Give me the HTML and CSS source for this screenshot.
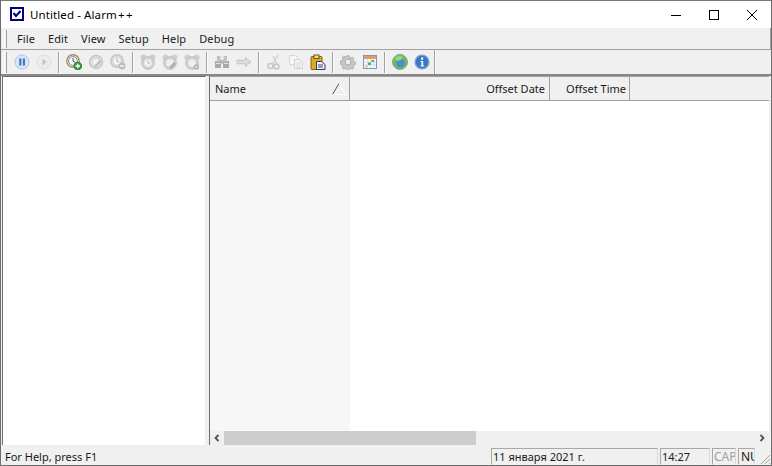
FILE: index.html
```html
<!DOCTYPE html>
<html lang="en">
<head>
<meta charset="utf-8">
<title>Untitled - Alarm++</title>
<link rel="stylesheet" href="styles.css">
</head>
<body>
<div class="window">
  <header class="titlebar">
    <svg class="appicon" width="14" height="14" viewBox="0 0 14 14"><rect x="1" y="1" width="12" height="12" fill="#fff" stroke="#000080" stroke-width="2"/><path d="M3.500 6l2.500 3 4.500-5" fill="none" stroke="#000080" stroke-width="2"/></svg>
    <span class="title">Untitled - Alarm<span class="plus">++</span></span>
    <div class="caption">
      <span class="capbtn"><svg width="12" height="12" viewBox="0 0 12 12"><path d="M1 6.500h10" stroke="#000"/></svg></span>
      <span class="capbtn"><svg width="12" height="12" viewBox="0 0 12 12"><rect x="1.500" y="1.500" width="9" height="9" fill="none" stroke="#000"/></svg></span>
      <span class="capbtn"><svg width="12" height="12" viewBox="0 0 12 12"><path d="M1 1l10 10M11 1L1 11" stroke="#000" fill="none"/></svg></span>
    </div>
  </header>
  <nav class="menubar">
    <span class="grip"></span>
    <span class="menu">File</span><span class="menu">Edit</span><span class="menu">View</span><span class="menu">Setup</span><span class="menu">Help</span><span class="menu">Debug</span>
  </nav>
  <div class="toolbar">
    <span class="grip tall"></span>
    <span class="tool"><svg viewBox="0 0 16 16"><circle cx="8" cy="8" r="7" fill="#dbe7f6" stroke="#a9c3e6"/><rect x="5.200" y="4.500" width="2.200" height="7" fill="#3f78c8"/><rect x="8.800" y="4.500" width="2.200" height="7" fill="#3f78c8"/></svg></span>
    <span class="tool"><svg viewBox="0 0 16 16"><circle cx="8" cy="8" r="7" fill="#ececec" stroke="#dedede"/><path d="M6.500 4.500l4 3.500-4 3.500z" fill="#c2c2c2"/></svg></span>
    <span class="sep"></span>
    <span class="tool"><svg viewBox="0 0 16 16"><circle cx="7" cy="7" r="6.200" fill="#e9eef5" stroke="#b08f52" stroke-width="1.400"/><circle cx="7" cy="7" r="4.400" fill="#f6f8fb" stroke="#6f8fb8"/><path d="M7 4v3.200l2.200 1" fill="none" stroke="#44608c"/><circle cx="11.800" cy="12" r="3.800" fill="#3f9e3f" stroke="#2c7a2c"/><path d="M11.800 9.800v4.400M9.600 12h4.400" stroke="#fff" stroke-width="1.300"/></svg></span>
    <span class="tool"><svg viewBox="0 0 16 16"><circle cx="8" cy="8" r="6.500" fill="#e2e2e2" stroke="#c4c4c4" stroke-width="1.400"/><circle cx="8" cy="8" r="4" fill="#f2f2f2" stroke="#cfcfcf"/><path d="M6 12l6-6 1.500 1.500-6 6z" fill="#bdbdbd"/></svg></span>
    <span class="tool"><svg viewBox="0 0 16 16"><circle cx="7" cy="7" r="6.200" fill="#e2e2e2" stroke="#c4c4c4" stroke-width="1.400"/><circle cx="7" cy="7" r="4.200" fill="#f4f4f4" stroke="#cfcfcf"/><path d="M7 4.200v3l2 1" fill="none" stroke="#b0b0b0"/><circle cx="12" cy="12" r="3.500" fill="#bcbcbc"/><path d="M10 12h4" stroke="#fff" stroke-width="1.300"/></svg></span>
    <span class="sep"></span>
    <span class="tool"><svg viewBox="0 0 16 16"><circle cx="3.500" cy="3.500" r="3" fill="#cfcfcf"/><circle cx="12.500" cy="3.500" r="3" fill="#cfcfcf"/><circle cx="8" cy="9" r="6.300" fill="#d2d2d2" stroke="#bebebe"/><circle cx="8" cy="9" r="3.800" fill="#f0f0f0"/><path d="M8 6.500V9l2 1" fill="none" stroke="#b5b5b5"/></svg></span>
    <span class="tool"><svg viewBox="0 0 16 16"><circle cx="3.500" cy="3.500" r="3" fill="#cfcfcf"/><circle cx="12.500" cy="3.500" r="3" fill="#cfcfcf"/><circle cx="8" cy="9" r="6.300" fill="#d2d2d2" stroke="#bebebe"/><circle cx="8" cy="9" r="3.800" fill="#f0f0f0"/><path d="M7 13l5-5 2 2-5 5z" fill="#aeaeae"/></svg></span>
    <span class="tool"><svg viewBox="0 0 16 16"><circle cx="3.500" cy="3.500" r="3" fill="#cfcfcf"/><circle cx="12.500" cy="3.500" r="3" fill="#cfcfcf"/><circle cx="8" cy="9" r="6.300" fill="#d2d2d2" stroke="#bebebe"/><circle cx="8" cy="9" r="3.800" fill="#f0f0f0"/><circle cx="12.500" cy="13" r="2.700" fill="#b0b0b0"/><path d="M11 13h3" stroke="#fff"/></svg></span>
    <span class="sep"></span>
    <span class="tool"><svg viewBox="0 0 16 16"><rect x="1" y="7" width="6" height="7" fill="#a8a8a8"/><rect x="9" y="7" width="6" height="7" fill="#a8a8a8"/><rect x="3" y="2" width="3.500" height="6" fill="#c2c2c2"/><rect x="9.500" y="2" width="3.500" height="6" fill="#c2c2c2"/><rect x="6" y="6" width="4" height="3.500" fill="#b4b4b4"/><path d="M2 9.500h4M10 9.500h4" stroke="#e6e6e6"/></svg></span>
    <span class="tool"><svg viewBox="0 0 16 16"><path d="M1 6.200h8.500V3.500L15 8l-5.500 4.500V9.800H1z" fill="#dcdcdc" stroke="#c4c4c4"/></svg></span>
    <span class="sep"></span>
    <span class="tool"><svg viewBox="0 0 16 16"><path d="M12 1L6.500 10M7 2l4 8" stroke="#d2d2d2" stroke-width="1.500" fill="none"/><circle cx="4.500" cy="12" r="2.500" fill="none" stroke="#c4c4c4" stroke-width="1.400"/><circle cx="10.500" cy="12.500" r="2.500" fill="none" stroke="#c4c4c4" stroke-width="1.400"/></svg></span>
    <span class="tool"><svg viewBox="0 0 16 16"><path d="M1.500 1.500h6l2 2v7h-8z" fill="#f7f7f7" stroke="#d6d6d6"/><path d="M6.500 5.500h5l3 3v6h-8z" fill="#f6f6f6" stroke="#d0d0d0"/><path d="M8 9h5M8 11h5M8 13h5" stroke="#d8d8d8"/></svg></span>
    <span class="tool"><svg viewBox="0 0 16 16"><rect x="1" y="2.500" width="11" height="13" rx="1" fill="#e0a928" stroke="#8a6410"/><rect x="4" y="1" width="5" height="3.500" fill="#f4dc8c" stroke="#6e5210"/><path d="M6.500 7.500h5l3.500 3v5h-8.500z" fill="#f4f6fa" stroke="#2f3c62"/><path d="M8 11h5M8 13h5" stroke="#37476e"/></svg></span>
    <span class="sep"></span>
    <span class="tool"><svg viewBox="0 0 16 16"><path d="M6.700.800h2.600l.4 2 1.600.7 1.700-1.100 1.900 1.900-1.100 1.700.7 1.600 2 .4v2.600l-2 .4-.7 1.600 1.100 1.700-1.900 1.900-1.700-1.100-1.600.7-.4 2H6.700l-.4-2-1.600-.7-1.700 1.100-1.900-1.900 1.100-1.700-.7-1.600-2-.4V6.800l2-.4.7-1.600-1.100-1.700 1.900-1.900 1.700 1.100 1.600-.7z" transform="translate(1 1) scale(.875)" fill="#c8c8c8" stroke="#a8a8a8"/><circle cx="8" cy="8" r="3" fill="#efefef" stroke="#a8a8a8"/></svg></span>
    <span class="tool"><svg viewBox="0 0 16 16"><rect x="1.500" y="1.500" width="13" height="13" fill="#f8fbff" stroke="#6f9bd0"/><rect x="2" y="2" width="12" height="3" fill="#ee9a50"/><path d="M2 8h12M2 11h12M5.500 5v9M9 5v9M12 5v9" stroke="#d5dde8"/><rect x="6" y="8.500" width="3" height="2.500" fill="#5cb05c"/><rect x="9.500" y="6" width="2.500" height="2" fill="#5cb05c"/><rect x="3" y="11.500" width="2.500" height="2" fill="#e2cb6a"/></svg></span>
    <span class="sep"></span>
    <span class="tool"><svg viewBox="0 0 16 16"><circle cx="8" cy="8" r="7.500" fill="#6dbb62" stroke="#7fae78"/><circle cx="8.500" cy="9" r="4.500" fill="#4a8fc8"/><path d="M3 4c2-2 5-3 8-1l-2 3-4 1z" fill="#9ad488"/></svg></span>
    <span class="tool"><svg viewBox="0 0 16 16"><circle cx="8" cy="8" r="7" fill="#3d78c4" stroke="#7ea6da" stroke-width="1.200"/><rect x="7" y="3.500" width="2.200" height="2.200" fill="#fff"/><path d="M6.500 7h2.700v4.500h1v1H6.500v-1h1V8h-1z" fill="#fff"/></svg></span>
    <span class="sep last"></span>
  </div>
  <main class="client">
    <section class="tree"></section>
    <section class="listpane">
      <div class="listhead">
        <span class="col name">Name<svg class="sort" width="14" height="12" viewBox="0 0 14 12"><path d="M.5 11.500L7 .5" stroke="#555" fill="none"/><path d="M7 .5l6.500 11H.5" stroke="#fff" fill="none"/></svg></span>
        <span class="col date">Offset Date</span>
        <span class="col time">Offset Time</span>
        <span class="col rest"></span>
      </div>
      <div class="listbody"><div class="namecol"></div></div>
      <div class="hscroll">
        <span class="arrow"><svg width="8" height="8" viewBox="0 0 8 8"><path d="M5.500 1L2.500 4l3 3" fill="none" stroke="#505050" stroke-width="1.800"/></svg></span>
        <span class="track"><span class="thumb"></span></span>
        <span class="arrow"><svg width="8" height="8" viewBox="0 0 8 8"><path d="M2.500 1l3 3-3 3" fill="none" stroke="#505050" stroke-width="1.800"/></svg></span>
      </div>
    </section>
  </main>
  <footer class="statusbar">
    <span class="help">For Help, press F1</span>
    <span class="pane pdate">11 января 2021 г.</span>
    <span class="pane ptime">14:27</span>
    <span class="pane pcap">CAP</span>
    <span class="pane pnum">NU</span>
    <svg class="resize" width="13" height="13" viewBox="0 0 13 13"><path d="M12 3L3 12M12 7l-5 5M12 11l-1 1" stroke="#a8a8a8" fill="none"/></svg>
  </footer>
</div>
</body>
</html>
```
FILE: styles.css
```css
* { box-sizing: border-box; }
html, body { margin: 0; padding: 0; height: 100%; overflow: hidden; }
body { font-family: "Noto Sans", "Open Sans", sans-serif; font-size: 11px; color: #000; background: #f0f0f0; }
.window { width: 772px; height: 466px; border: 1px solid #6e6e6e; border-top-color: #787878; display: flex; flex-direction: column; background: #f0f0f0; }
.titlebar { height: 27px; background: #fff; display: flex; align-items: center; padding-left: 9px; flex: none; }
.appicon { width: 14px; height: 14px; flex: none; margin-bottom: 1px; }
.title { margin-left: 6px; font-size: 11.500px; color: #000; line-height: 25px; margin-bottom: 1px; letter-spacing: .1px; }
.plus { margin-left: 1px; letter-spacing: 1.500px; }
.caption { margin-left: auto; display: flex; align-self: stretch; }
.capbtn { width: 38px; display: flex; align-items: center; justify-content: center; }
.menubar { height: 22px; flex: none; display: flex; align-items: center; padding-left: 3px; border-bottom: 1px solid #a0a0a0; border-right: 1px solid #a0a0a0; }
.grip { width: 3px; height: 18px; border-left: 1px solid #fff; border-right: 1px solid #a0a0a0; background: #f0f0f0; flex: none; margin-right: 4px; }
.grip.tall { height: 21px; margin-right: 4px; }
.menu { padding: 0 6px; margin-right: 1px; color: #1a1a1a; line-height: 20px; letter-spacing: .1px; }
.toolbar { height: 26px; flex: none; display: flex; align-items: center; padding-left: 3px; border-bottom: 2px solid #888; }
.tool { width: 22px; height: 16px; display: flex; justify-content: center; flex: none; }
.tool svg { width: 16px; height: 16px; display: block; }
.sep { width: 2px; height: 21px; border-left: 1px solid #a0a0a0; border-right: 1px solid #fff; margin: 0 3px; flex: none; }
.sep.last { height: 24px; margin: 0 0 0 1px; }
.client { flex: 1; min-height: 0; display: flex; background: #f0f0f0; padding-left: 1px; padding-right: 2px; }
.tree { width: 204px; background: #fff; border-left: 1px solid #6e6e6e; border-top: 1px solid #6e6e6e; border-right: 1px solid #f0f0f0; flex: none; }
.listpane { flex: 1; margin-left: 3px; min-width: 0; display: flex; flex-direction: column; background: #fff; border-left: 1px solid #6e6e6e; border-top: 1px solid #a0a0a0; }
.listhead { height: 24px; display: flex; flex: none; background: #f0f0f0; border-bottom: 1px solid #a0a0a0; color: #1a1a1a; }
.col { border-right: 1px solid #a0a0a0; line-height: 24px; padding: 0 3px 0 5px; flex: none; white-space: nowrap; }
.col.name { width: 140px; display: flex; align-items: center; justify-content: space-between; padding-right: 3px; }
.col.date { width: 200px; text-align: right; padding-right: 4px; }
.col.time { width: 80px; text-align: right; }
.col.rest { flex: 1; border-right: 0; }
.sort { display: block; }
.listbody { flex: 1; min-height: 0; background: #fff; display: flex; }
.namecol { width: 140px; background: #f7f7f7; }
.hscroll { height: 14px; flex: none; display: flex; background: #f0f0f0; }
.arrow { width: 14px; display: flex; align-items: center; justify-content: center; flex: none; }
.track { flex: 1; display: flex; }
.thumb { width: 252px; background: #cdcdcd; }
.statusbar { height: 20px; flex: none; display: flex; align-items: center; padding-left: 4px; color: #1a1a1a; }
.help { flex: 1; line-height: 18px; margin-top: 4px; }
.pane { height: 17px; line-height: 16px; border: 1px solid #a8a8a8; border-right-color: #dadada; border-bottom-color: #f0f0f0; padding-left: 1px; margin-left: 2px; white-space: nowrap; overflow: hidden; flex: none; margin-top: 2px; }
.pdate { width: 167px; }
.ptime { width: 50px; }
.pcap { width: 24px; color: #a0a0a0; font-size: 12px; }
.pnum { width: 17px; font-size: 12px; padding-left: 2px; }
.resize { flex: none; width: 13px; height: 13px; margin: 6px 0 0 3px; }
```
